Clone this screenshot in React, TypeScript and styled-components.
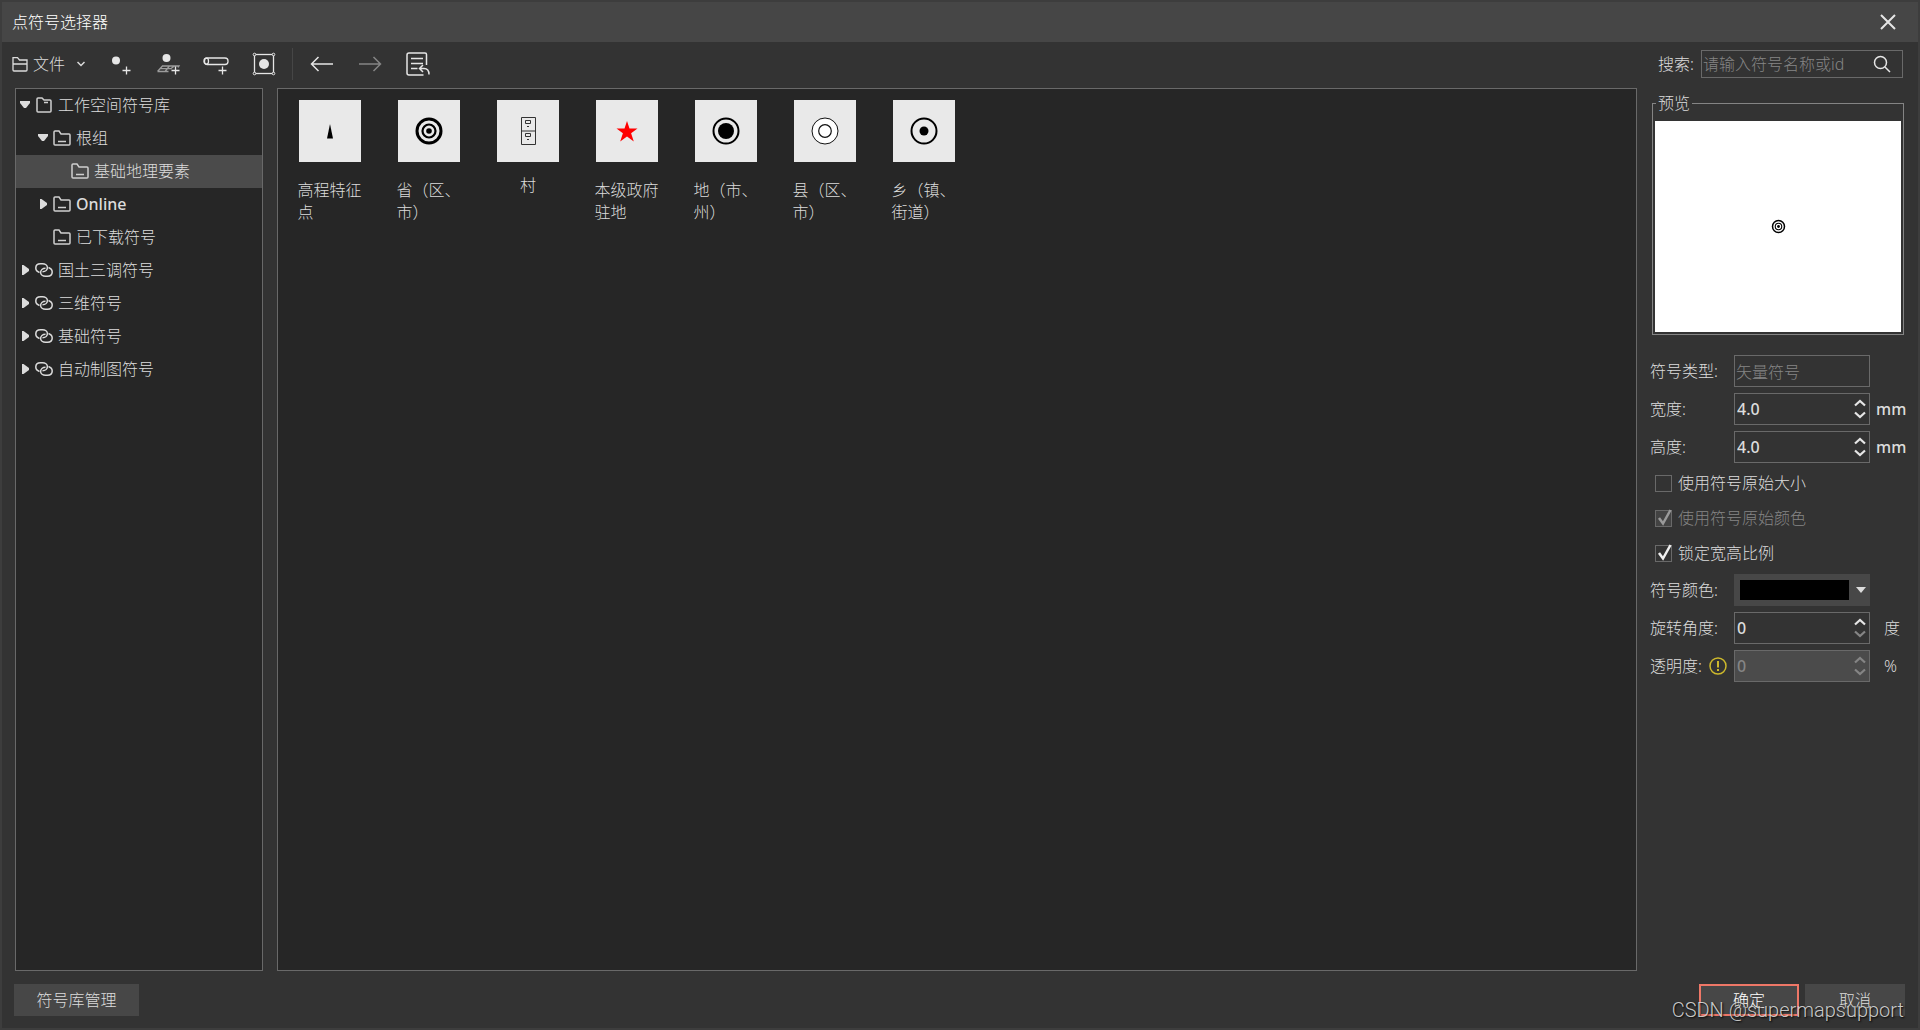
import React, { useState } from 'react';
import styled, { createGlobalStyle, css } from 'styled-components';

const color = {
  frame: '#3d3d3d',
  title: '#464646',
  surface: '#333333',
  well: '#262626',
  line: '#696969',
  selected: '#4b4b4b',
  control: '#474747',
  text: '#dcdcdc',
  muted: '#858585',
  accent: '#ee7767',
};

const GlobalStyle = createGlobalStyle`
  *, *::before, *::after { box-sizing: border-box; }
  body { margin: 0; background: ${color.surface}; }
  body, button, input, select {
    font-family: "Noto Sans", "Noto Sans CJK SC", sans-serif;
    font-size: 16px;
    font-weight: 300;
    line-height: 22px;
    color: ${color.text};
  }
  button { cursor: pointer; }
`;

const Dialog = styled.div`
  position: relative;
  display: flex;
  flex-direction: column;
  min-height: 100vh;
  border: 2px solid ${color.frame};
  background: ${color.surface};
`;

const TitleBar = styled.header`
  display: flex;
  align-items: center;
  justify-content: space-between;
  height: 40px;
  padding: 0 22px 0 10px;
  background: ${color.title};
`;

const Title = styled.h1`
  margin: 0;
  font-size: 16px;
  font-weight: 300;
  color: #ffffff;
`;

const IconButton = styled.button`
  display: flex;
  align-items: center;
  justify-content: center;
  padding: 0;
  border: 0;
  background: transparent;
  color: #e6e6e6;
  &:disabled { color: #858585; cursor: default; }
`;

const TopRow = styled.div`
  display: flex;
  align-items: center;
  justify-content: space-between;
  height: 46px;
  padding: 0 15px 2px 10px;
`;

const Toolbar = styled.div`
  display: flex;
  align-items: center;
`;

const MenuButton = styled(IconButton)`
  gap: 5px;
  margin-right: 21px;
  color: ${color.text};
  svg:last-child { margin-left: 7px; }
`;

const Tools = styled.div`
  display: flex;
  align-items: center;
  gap: 20px;
`;

const Separator = styled.span`
  width: 1px;
  height: 32px;
  margin: 0 15px 0 14px;
  background: #464646;
`;

const SearchArea = styled.div`
  display: flex;
  align-items: center;
  gap: 7px;
`;

const SearchBox = styled.div`
  display: flex;
  align-items: center;
  width: 202px;
  height: 28px;
  padding-right: 11px;
  border: 1px solid ${color.line};
`;

const SearchInput = styled.input`
  flex: 1;
  min-width: 0;
  padding: 0 1px;
  border: 0;
  outline: 0;
  background: transparent;
  &::placeholder { color: ${color.muted}; opacity: 1; }
`;

const Main = styled.main`
  display: grid;
  grid-template-columns: 248px minmax(0, 1fr) 281px;
  flex: 1;
  padding-left: 13px;
`;

const Tree = styled.ul`
  margin: 0;
  padding: 0;
  list-style: none;
  border: 1px solid ${color.line};
  background: ${color.well};
`;

const TreeRow = styled.li<{ $level: number; $selected?: boolean }>`
  display: flex;
  align-items: center;
  height: 33px;
  padding-bottom: 2px;
  padding-left: ${(p) => 3 + p.$level * 18}px;
  background: ${(p) => (p.$selected ? color.selected : 'transparent')};
`;

const Caret = styled.span`
  display: flex;
  justify-content: center;
  width: 12px;
  margin-right: 4px;
`;

const TreeLabel = styled.span<{ $latin?: boolean }>`
  margin-left: 5px;
  font-weight: ${(p) => (p.$latin ? 500 : 300)};
`;

const Gallery = styled.section`
  display: flex;
  flex-wrap: wrap;
  align-content: flex-start;
  gap: 24px 33px;
  margin-left: 14px;
  padding: 11px 19px;
  border: 1px solid ${color.line};
  background: ${color.well};
`;

const Symbol = styled.figure`
  display: flex;
  flex-direction: column;
  align-items: center;
  width: 66px;
  margin: 0;
`;

const Tile = styled.div`
  width: 62px;
  height: 62px;
  background: #e9e9e9;
`;

const Caption = styled.figcaption<{ $wraps: boolean }>`
  max-width: 65px;
  margin-top: ${(p) => (p.$wraps ? 17 : 12)}px;
`;

const Side = styled.aside`
  padding: 4px 0 0 13px;
`;

const Preview = styled.fieldset`
  margin: 0 14px 20px 2px;
  padding: 7px 2px 2px;
  border: 1px solid #848484;
`;

const Legend = styled.legend`
  margin-left: 1px;
  padding: 0 2px;
`;

const Canvas = styled.div`
  display: flex;
  align-items: center;
  justify-content: center;
  height: 211px;
  background: #ffffff;
`;

const Fields = styled.div`
  display: flex;
  flex-direction: column;
  gap: 6px;
`;

const Field = styled.div`
  display: grid;
  grid-template-columns: 84px 136px 1fr;
  align-items: center;
  height: 32px;
`;

const FieldLabel = styled.label`
  display: flex;
  align-items: center;
  gap: 7px;
`;

const Unit = styled.span<{ $latin?: boolean }>`
  padding-left: ${(p) => (p.$latin ? 6 : 14)}px;
  font-weight: ${(p) => (p.$latin ? 500 : 300)};
`;

const boxed = css`
  width: 100%;
  height: 32px;
  border: 1px solid ${color.line};
`;

const TextBox = styled.input`
  ${boxed}
  padding: 0 1px;
  background: transparent;
  &:disabled { color: ${color.muted}; }
`;

const SpinBox = styled.div<{ $disabled?: boolean }>`
  ${boxed}
  display: flex;
  background: ${(p) => (p.$disabled ? '#4b4b4b' : 'transparent')};
`;

const SpinInput = styled.input`
  flex: 1;
  min-width: 0;
  padding: 0 2px;
  border: 0;
  outline: 0;
  background: transparent;
  font-weight: 500;
  appearance: textfield;
  &::-webkit-inner-spin-button { appearance: none; }
  &:disabled { color: ${color.muted}; }
`;

const Steps = styled.div`
  display: flex;
  flex-direction: column;
  justify-content: center;
  gap: 4px;
  width: 18px;
`;

const ColorPicker = styled.div`
  position: relative;
  display: flex;
  align-items: center;
  justify-content: space-between;
  height: 32px;
  padding: 0 3px 0 6px;
  background: ${color.control};
`;

const Swatch = styled.span`
  width: 109px;
  height: 20px;
  background: #000000;
`;

const ColorSelect = styled.select`
  position: absolute;
  inset: 0;
  border: 0;
  background: transparent;
  appearance: none;
`;

const Checks = styled.div`
  display: flex;
  flex-direction: column;
  gap: 13px;
  padding: 3px 0 4px 5px;
`;

const CheckLabel = styled.label<{ $disabled?: boolean }>`
  display: flex;
  align-items: center;
  gap: 6px;
  color: ${(p) => (p.$disabled ? color.muted : color.text)};
`;

const CheckFrame = styled.span`
  position: relative;
  display: flex;
  svg { position: absolute; left: 0; bottom: 0; pointer-events: none; }
`;

const CheckInput = styled.input`
  width: 17px;
  height: 17px;
  margin: 0;
  border: 1px solid ${color.line};
  appearance: none;
  &:disabled { background: #434343; }
`;

const Footer = styled.footer`
  display: flex;
  gap: 6px;
  padding: 13px 13px 12px 12px;
`;

const PushButton = styled.button<{ $wide?: boolean; $primary?: boolean }>`
  width: ${(p) => (p.$wide ? 125 : 100)}px;
  height: 32px;
  padding: 0;
  margin-right: ${(p) => (p.$wide ? 'auto' : '0')};
  border: ${(p) => (p.$primary ? `2px solid ${color.accent}` : '0')};
  background: ${color.control};
  color: ${(p) => (p.$primary ? '#ffffff' : color.text)};
`;

const Watermark = styled.span`
  position: absolute;
  right: 14px;
  bottom: 6px;
  font-family: Roboto, sans-serif;
  font-size: 20px;
  font-weight: 300;
  line-height: 24px;
  color: rgba(220, 220, 220, 0.9);
  text-shadow: 1px 1px 2px #000000;
  pointer-events: none;
`;

const stroke = { fill: 'none', stroke: 'currentColor', strokeWidth: 1.3 };

const CloseIcon = () => (
  <svg width="16" height="16" {...stroke} strokeWidth={2}><path d="M1 1l14 14M15 1L1 15" /></svg>
);

const FileIcon = () => (
  <svg width="16" height="16" {...stroke}>
    <path d="M1 14V1.600h4.500l2 2.400h7.500V14a1 1 0 0 1-1 1H2a1 1 0 0 1-1-1zM1 8h14" />
  </svg>
);

const ChevronDown = () => (
  <svg width="8" height="6" {...stroke} strokeWidth={1.5}><path d="M.5 1L4 4.500 7.500 1" /></svg>
);

const AddPointIcon = () => (
  <svg width="28" height="28" {...stroke}>
    <circle cx="10" cy="10.500" r="4" fill="currentColor" stroke="none" />
    <path d="M16.500 20.500h8M20.500 16.500v8" />
  </svg>
);

const AddSurfaceIcon = () => (
  <svg width="28" height="28" {...stroke}>
    <circle cx="12.500" cy="8" r="4" fill="currentColor" stroke="none" />
    <path d="M3.500 21.500h11M3.500 21.500l5-5.500h16.500l-1 1.500M6 18.700h12M11 21.500l4.500-5.500M17 18.500l3.500-2.500" stroke="#9c9c9c" />
    <path d="M17.500 20.500h8M21.500 16.500v8" />
  </svg>
);

const AddLineIcon = () => (
  <svg width="28" height="28" {...stroke}>
    <rect x="2" y="8" width="24" height="6.500" rx="3" />
    <ellipse cx="4.500" cy="11.200" rx="2" ry="3" />
    <path d="M16.500 20.500h8M20.500 16.500v8" />
  </svg>
);

const FrameIcon = () => (
  <svg width="28" height="28" {...stroke}>
    <rect x="4.500" y="4.500" width="19" height="19" />
    <circle cx="14" cy="14" r="5" fill="currentColor" stroke="none" />
    {[4.5, 23.5].map((x) => [4.5, 23.5].map((y) => (
      <circle key={`${x}-${y}`} cx={x} cy={y} r="1.300" fill={color.surface} strokeWidth="1" />
    )))}
  </svg>
);

const ArrowIcon = ({ flip }: { flip?: boolean }) => (
  <svg width="28" height="28" {...stroke} strokeWidth={1.5}>
    <path
      d="M25 14H3.500M10.500 7l-7 7 7 7"
      transform={flip ? 'matrix(-1 0 0 1 28 0)' : undefined}
    />
  </svg>
);

const ListBackIcon = () => (
  <svg width="28" height="28" {...stroke} strokeWidth={1.5}>
    <path d="M22.500 15V4.500a1.500 1.500 0 0 0-1.500-1.500H5a2 2 0 0 0-2 2v18a2 2 0 0 0 2 2h14.500M7 8.500H19M7 13.500H19M7 18.500h6.500" />
    <path d="M19 15l-3.500 3.500L19 22M15.500 18.500H20c3 0 5 2 5 6" />
  </svg>
);

const SearchIcon = () => (
  <svg width="18" height="18" {...stroke} strokeWidth={1.5}>
    <circle cx="7.500" cy="7.500" r="6" /><path d="M12 12l5 5" />
  </svg>
);

const FolderIcon = ({ root }: { root?: boolean }) => (
  <svg width="18" height="18" {...stroke} strokeWidth={1.5} stroke="#cfcfcf">
    {root
      ? <path d="M2 15V3a1 1 0 0 1 1-1h4l2 2h6a1 1 0 0 1 1 1v10a1 1 0 0 1-1 1H3a1 1 0 0 1-1-1zM9 6.500h4" />
      : <path d="M1 15V3a1 1 0 0 1 1-1h4l2 3h8a1 1 0 0 1 1 1v9a1 1 0 0 1-1 1H2a1 1 0 0 1-1-1zM5 12.500h8" />}
  </svg>
);

const LinkIcon = () => (
  <svg width="18" height="18" {...stroke} strokeWidth={1.5} stroke="#dcdcdc">
    <path d="M4.500 11.500C2.300 10.700.8 9 .8 7c0-2.500 2-4.200 4.700-4.200h2c2.700 0 4.900 1.500 4.900 3.700 0 2.400-2 4.300-4.900 4.300" />
    <path d="M13.500 6.500c2.200.8 3.700 2.500 3.700 4.500 0 2.500-2 4.200-4.700 4.200h-2c-2.700 0-4.900-1.500-4.900-3.700 0-2.400 2-4.300 4.900-4.300" />
  </svg>
);

const TreeCaret = ({ open }: { open: boolean }) => (
  <svg width="10" height="12" fill="#dcdcdc">
    {open ? <path d="M0 2h10v2L6 9H4L0 4z" /> : <path d="M2 1h1.500l5.500 4v2l-5.500 4H2z" />}
  </svg>
);

const StepIcon = ({ down }: { down?: boolean }) => (
  <svg width="12" height="8" {...stroke} strokeWidth={2.2}>
    <path d={down ? 'M1 1.500l5 4.500 5-4.500' : 'M1 6.500L6 2l5 4.500'} />
  </svg>
);

const CheckMark = ({ dim }: { dim?: boolean }) => (
  <svg width="18" height="18" fill="none" stroke={dim ? '#9a9a9a' : '#f0f0f0'} strokeWidth="2.500">
    <path d="M4 9l4 5.500L15.500 1" />
  </svg>
);

const WarnIcon = () => (
  <svg width="18" height="18" fill="none" stroke="#cdb92c" strokeWidth="1.500">
    <circle cx="9" cy="9" r="8" /><path d="M9 4v6.500M9 12v2" strokeWidth="2" />
  </svg>
);

const Rings = ({ size }: { size: number }) => (
  <svg width={size} height={size} viewBox="0 0 62 62" fill="none" stroke="#000">
    <circle cx="31" cy="31" r="12" strokeWidth="3" />
    <circle cx="31" cy="31" r="6.500" strokeWidth="2.200" />
    <circle cx="31" cy="31" r="2.800" fill="#000" stroke="none" />
  </svg>
);

const drawings: Record<string, React.ReactNode> = {
  peak: <path d="M31 24l3 14.500h-6z" fill="#000" />,
  cabinet: (
    <g stroke="#333" fill="none">
      <path d="M24.500 17.500h14v27h-14zM24.500 31h14" />
      <path d="M28.500 20.500h5v3h-5zM28.500 33.500h5v3h-5z" />
      <path d="M30 26.500h2M30 39.500h2" />
    </g>
  ),
  star: <path d="M31 21l2.500 7.500h8l-6.400 4.700 2.700 8.300L31 36.400l-6.800 5.100 2.700-8.300-6.400-4.700h8z" fill="#f00" />,
  city: (
    <g><circle cx="31" cy="31" r="12.500" stroke="#000" strokeWidth="2" fill="none" /><circle cx="31" cy="31" r="8" /></g>
  ),
  county: (
    <g stroke="#111" fill="#fff"><circle cx="31" cy="31" r="13" /><circle cx="31" cy="31" r="6.300" strokeWidth="1.200" /></g>
  ),
  town: (
    <g><circle cx="31" cy="31" r="12.500" stroke="#000" strokeWidth="2" fill="none" /><circle cx="31" cy="31" r="4.500" /></g>
  ),
};

const symbols = [
  { name: '高程特征点', art: 'peak' },
  { name: '省（区、市）', art: 'rings' },
  { name: '村', art: 'cabinet' },
  { name: '本级政府驻地', art: 'star' },
  { name: '地（市、州）', art: 'city' },
  { name: '县（区、市）', art: 'county' },
  { name: '乡（镇、街道）', art: 'town' },
];

type Node = { name: string; level: number; icon: 'root' | 'folder' | 'link'; open?: boolean; selected?: boolean };

const nodes: Node[] = [
  { name: '工作空间符号库', level: 0, icon: 'root', open: true },
  { name: '根组', level: 1, icon: 'folder', open: true },
  { name: '基础地理要素', level: 2, icon: 'folder', selected: true },
  { name: 'Online', level: 1, icon: 'folder', open: false },
  { name: '已下载符号', level: 1, icon: 'folder' },
  { name: '国土三调符号', level: 0, icon: 'link', open: false },
  { name: '三维符号', level: 0, icon: 'link', open: false },
  { name: '基础符号', level: 0, icon: 'link', open: false },
  { name: '自动制图符号', level: 0, icon: 'link', open: false },
];

type SpinProps = {
  id: string;
  label: string;
  initial: string;
  unit: string;
  latin?: boolean;
  disabled?: boolean;
  atMin?: boolean;
  warn?: boolean;
};

function SpinField({ id, label, initial, unit, latin, disabled, atMin, warn }: SpinProps) {
  const [value, setValue] = useState(initial);
  const digits = initial.includes('.') ? 1 : 0;
  const step = (by: number) => setValue((Number(value) + by).toFixed(digits));
  return (
    <Field>
      <FieldLabel htmlFor={id}>{label}{warn && <WarnIcon />}</FieldLabel>
      <SpinBox $disabled={disabled}>
        <SpinInput id={id} type="number" value={value} disabled={disabled} onChange={(e) => setValue(e.target.value)} />
        <Steps>
          <IconButton aria-label={`${label}+`} disabled={disabled} onClick={() => step(1)}><StepIcon /></IconButton>
          <IconButton aria-label={`${label}-`} disabled={disabled || atMin} onClick={() => step(-1)}><StepIcon down /></IconButton>
        </Steps>
      </SpinBox>
      <Unit $latin={latin}>{unit}</Unit>
    </Field>
  );
}

function CheckField({ label, initial, disabled }: { label: string; initial: boolean; disabled?: boolean }) {
  const [checked, setChecked] = useState(initial);
  return (
    <CheckLabel $disabled={disabled}>
      <CheckFrame>
        <CheckInput type="checkbox" checked={checked} disabled={disabled} onChange={() => setChecked(!checked)} />
        {checked && <CheckMark dim={disabled} />}
      </CheckFrame>
      {label}
    </CheckLabel>
  );
}

export default function App() {
  return (
    <Dialog>
      <GlobalStyle />
      <TitleBar>
        <Title>点符号选择器</Title>
        <IconButton aria-label="关闭"><CloseIcon /></IconButton>
      </TitleBar>

      <TopRow>
        <Toolbar>
          <MenuButton><FileIcon />文件<ChevronDown /></MenuButton>
          <Tools>
            <IconButton aria-label="新建二维点符号"><AddPointIcon /></IconButton>
            <IconButton aria-label="新建三维点符号"><AddSurfaceIcon /></IconButton>
            <IconButton aria-label="新建管点符号"><AddLineIcon /></IconButton>
            <IconButton aria-label="编辑符号"><FrameIcon /></IconButton>
          </Tools>
          <Separator />
          <Tools>
            <IconButton aria-label="后退"><ArrowIcon /></IconButton>
            <IconButton aria-label="前进" disabled><ArrowIcon flip /></IconButton>
            <IconButton aria-label="历史"><ListBackIcon /></IconButton>
          </Tools>
        </Toolbar>
        <SearchArea>
          <label htmlFor="search">搜索:</label>
          <SearchBox>
            <SearchInput id="search" placeholder="请输入符号名称或id" />
            <IconButton aria-label="搜索"><SearchIcon /></IconButton>
          </SearchBox>
        </SearchArea>
      </TopRow>

      <Main>
        <Tree>
          {nodes.map((n) => (
            <TreeRow key={n.name} $level={n.level} $selected={n.selected}>
              <Caret>{n.open !== undefined && <TreeCaret open={n.open} />}</Caret>
              {n.icon === 'link' ? <LinkIcon /> : <FolderIcon root={n.icon === 'root'} />}
              <TreeLabel $latin={n.name === 'Online'}>{n.name}</TreeLabel>
            </TreeRow>
          ))}
        </Tree>

        <Gallery>
          {symbols.map((s) => (
            <Symbol key={s.name}>
              <Tile>
                {s.art === 'rings' ? <Rings size={62} /> : <svg width="62" height="62">{drawings[s.art]}</svg>}
              </Tile>
              <Caption $wraps={s.name.length > 4}>{s.name}</Caption>
            </Symbol>
          ))}
        </Gallery>

        <Side>
          <Preview>
            <Legend>预览</Legend>
            <Canvas><Rings size={31} /></Canvas>
          </Preview>
          <Fields>
            <Field>
              <FieldLabel htmlFor="kind">符号类型:</FieldLabel>
              <TextBox id="kind" defaultValue="矢量符号" disabled />
            </Field>
            <SpinField id="width" label="宽度:" initial="4.0" unit="mm" latin />
            <SpinField id="height" label="高度:" initial="4.0" unit="mm" latin />
            <Checks>
              <CheckField label="使用符号原始大小" initial={false} />
              <CheckField label="使用符号原始颜色" initial disabled />
              <CheckField label="锁定宽高比例" initial />
            </Checks>
            <Field>
              <FieldLabel htmlFor="color">符号颜色:</FieldLabel>
              <ColorPicker>
                <Swatch />
                <svg width="12" height="6" fill="#dcdcdc"><path d="M1 0h10L6 6z" /></svg>
                <ColorSelect id="color"><option value="#000000" aria-label="黑色" /></ColorSelect>
              </ColorPicker>
            </Field>
            <SpinField id="angle" label="旋转角度:" initial="0" unit="度" atMin />
            <SpinField id="alpha" label="透明度:" initial="0" unit="%" disabled warn />
          </Fields>
        </Side>
      </Main>

      <Footer>
        <PushButton $wide>符号库管理</PushButton>
        <PushButton $primary>确定</PushButton>
        <PushButton>取消</PushButton>
      </Footer>
      <Watermark>CSDN @supermapsupport</Watermark>
    </Dialog>
  );
}
